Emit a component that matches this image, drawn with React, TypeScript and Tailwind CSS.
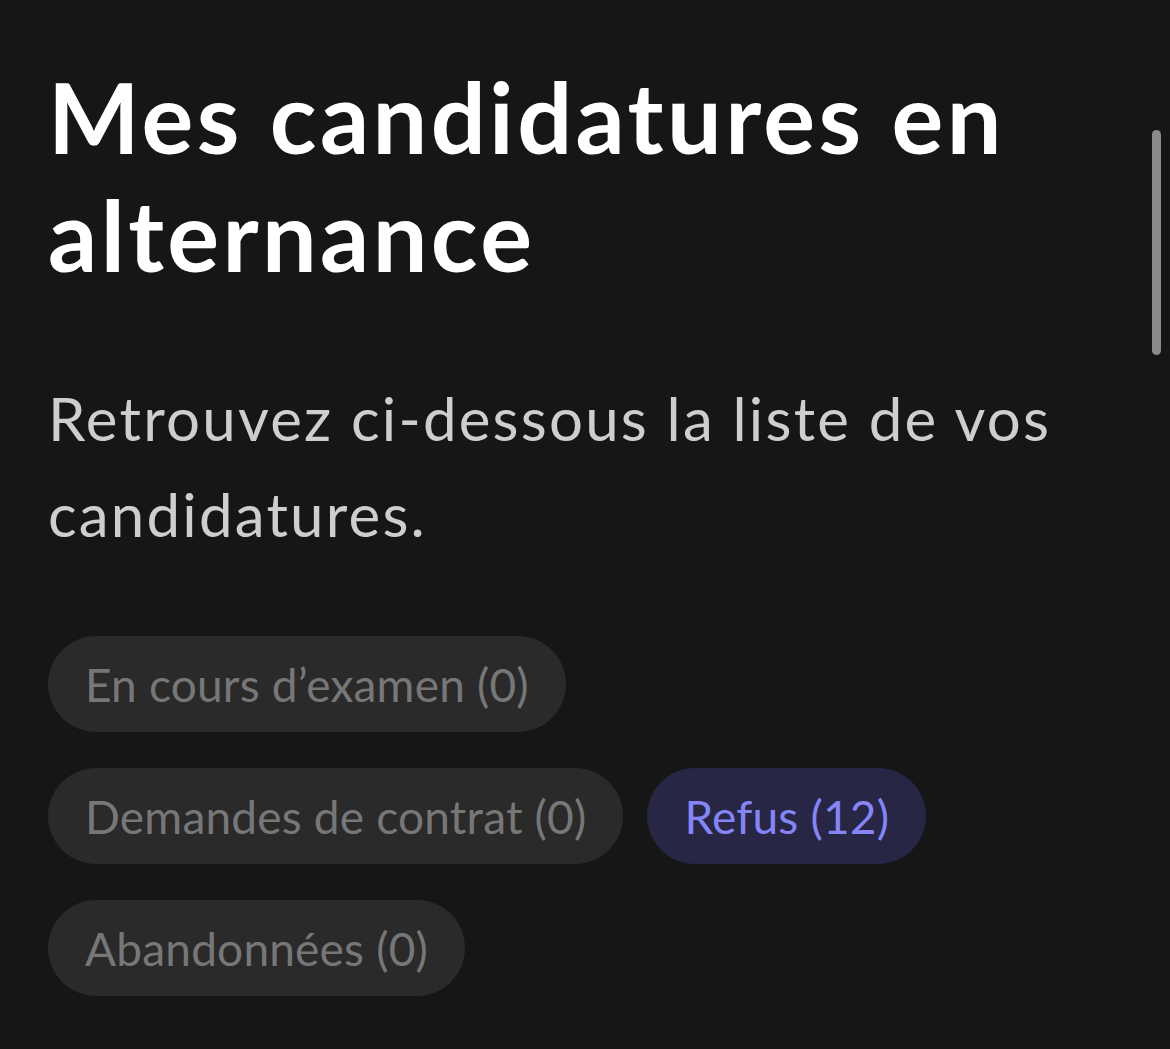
const tags = [
  { label: "En cours d\u2019examen (0)", active: false },
  { label: "Demandes de contrat (0)", active: false },
  { label: "Refus (12)", active: true },
  { label: "Abandonnées (0)", active: false },
];

export default function App() {
  return (
    <main className="relative min-h-screen w-full bg-[#161616] font-['Lato',sans-serif]">
      <div className="px-[48px] pt-[58px]">
        <h1 className="mb-[76px] text-[97px] font-bold leading-[118px] tracking-[3.4px] text-white">
          Mes candidatures en alternance
        </h1>
        <p className="mb-[74px] text-[60px] leading-[96px] tracking-[2.2px] text-[#cecece]">
          Retrouvez ci-dessous la liste de vos candidatures.
        </p>
        <ul className="flex flex-wrap gap-x-[24px] gap-y-[36px]">
          {tags.map((t) => (
            <li key={t.label}>
              <button
                className={
                  t.active
                    ? "flex h-[96px] items-center rounded-full bg-[#272745] px-[37px] text-[46px] tracking-[0.2px] text-[#8585f6]"
                    : "flex h-[96px] items-center rounded-full bg-[#2a2a2a] px-[37px] text-[46px] tracking-[0.2px] text-[#777777]"
                }
              >
                {t.label}
              </button>
            </li>
          ))}
        </ul>
      </div>
      <div className="absolute right-[9px] top-[130px] h-[225px] w-[9px] rounded-full bg-[#8a8a8a]" />
    </main>
  );
}
